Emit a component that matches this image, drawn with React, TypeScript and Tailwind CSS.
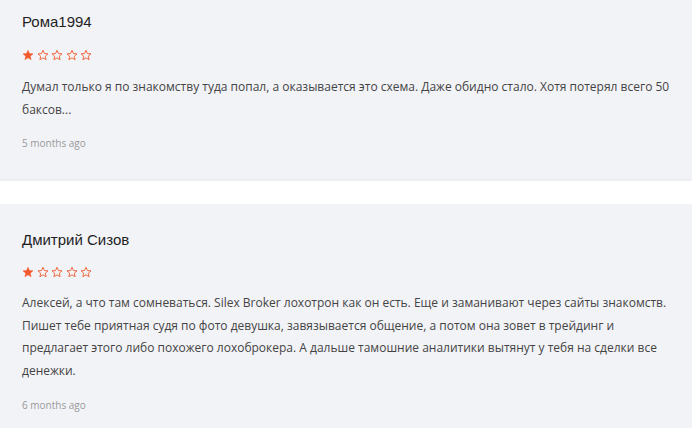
import React from "react";

const Star = ({ filled }: { filled: boolean }) => (
  <svg width="12" height="12" viewBox="0 0 24 24" className="shrink-0">
    <path
      d="M12 2.5l2.9 6.6 7.1.6-5.4 4.7 1.6 7-6.2-3.7-6.2 3.7 1.6-7L2 9.7l7.1-.6z"
      fill={filled ? "#f0592b" : "none"}
      stroke="#f0592b"
      strokeWidth={filled ? 1 : 1.8}
      strokeLinejoin="round"
    />
  </svg>
);

const Stars = ({ n }: { n: number }) => (
  <div className="flex gap-[2.5px]">
    {[0, 1, 2, 3, 4].map((i) => (
      <Star key={i} filled={i < n} />
    ))}
  </div>
);

const Review = ({
  name,
  text,
  date,
  top,
  starGap,
  textGap,
}: {
  name: string;
  text: string;
  date: string;
  top: string;
  starGap: string;
  textGap: string;
}) => (
  <div className={`bg-[#f2f3f7] px-[22px] ${top} pb-[31px]`}>
    <div className="text-[15px] leading-[20px] text-[#1f1f1f] font-['Liberation_Sans',Arial,sans-serif]">
      {name}
    </div>
    <div className={starGap}>
      <Stars n={1} />
    </div>
    <p className={`${textGap} text-[12px] leading-[22.6px] text-[#444] font-['Open_Sans',sans-serif]`}>
      {text}
    </p>
    <div className="mt-[15px] text-[10px] leading-[14px] text-[#999] font-['Open_Sans',sans-serif]">
      {date}
    </div>
  </div>
);

export default function App() {
  return (
    <div className="w-[692px] h-[428px] overflow-hidden bg-[#f2f3f7]">
      <Review
        top="pt-[12px]"
        starGap="mt-[17px]"
        textGap="mt-[15px]"
        name="Рома1994"
        text="Думал только я по знакомству туда попал, а оказывается это схема. Даже обидно стало. Хотя потерял всего 50 баксов..."
        date="5 months ago"
      />
      <div className="h-[23px] bg-white shadow-[0_-2px_3px_rgba(0,0,0,0.03)]" />
      <Review
        top="pt-[26px]"
        starGap="mt-[16px]"
        textGap="mt-[14px]"
        name="Дмитрий Сизов"
        text="Алексей, а что там сомневаться. Silex Broker лохотрон как он есть. Еще и заманивают через сайты знакомств. Пишет тебе приятная судя по фото девушка, завязывается общение, а потом она зовет в трейдинг и предлагает этого либо похожего лохоброкера. А дальше тамошние аналитики вытянут у тебя на сделки все денежки."
        date="6 months ago"
      />
    </div>
  );
}
